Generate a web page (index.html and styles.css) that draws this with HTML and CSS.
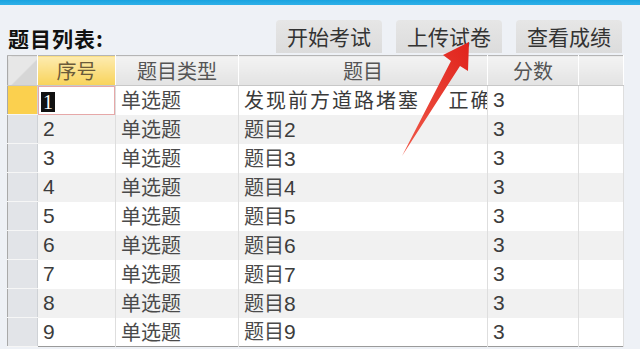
FILE: index.html
```html
<!DOCTYPE html>
<html lang="zh-CN">
<head>
    <meta charset="UTF-8">
    <title>题目列表</title>
    <link rel="stylesheet" href="styles.css">
</head>
<body>
    <div class="topbar"></div>
    <div class="toolbar">
        <h1 class="title">题目列表:</h1>
        <div class="actions">
            <button class="btn">开始考试</button>
            <button class="btn">上传试卷</button>
            <button class="btn">查看成绩</button>
        </div>
    </div>

    <div class="grid-wrap">
        <table class="grid">
            <colgroup>
                <col class="c-sel">
                <col class="c-no">
                <col class="c-type">
                <col class="c-q">
                <col class="c-score">
                <col class="c-rest">
            </colgroup>
            <thead>
                <tr>
                    <th class="corner"></th>
                    <th class="active-col">序号</th>
                    <th>题目类型</th>
                    <th>题目</th>
                    <th>分数</th>
                    <th></th>
                </tr>
            </thead>
            <tbody>
                <tr class="selected">
                    <td class="sel current"></td>
                    <td class="editing"><span class="caret">1</span></td>
                    <td>单选题</td>
                    <td class="clip">发现前方道路堵塞　 正确答案</td>
                    <td class="num">3</td>
                    <td></td>
                </tr>
                <tr><td class="sel"></td><td class="num">2</td><td>单选题</td><td>题目<span class="num">2</span></td><td class="num">3</td><td></td></tr>
                <tr><td class="sel"></td><td class="num">3</td><td>单选题</td><td>题目<span class="num">3</span></td><td class="num">3</td><td></td></tr>
                <tr><td class="sel"></td><td class="num">4</td><td>单选题</td><td>题目<span class="num">4</span></td><td class="num">3</td><td></td></tr>
                <tr><td class="sel"></td><td class="num">5</td><td>单选题</td><td>题目<span class="num">5</span></td><td class="num">3</td><td></td></tr>
                <tr><td class="sel"></td><td class="num">6</td><td>单选题</td><td>题目<span class="num">6</span></td><td class="num">3</td><td></td></tr>
                <tr><td class="sel"></td><td class="num">7</td><td>单选题</td><td>题目<span class="num">7</span></td><td class="num">3</td><td></td></tr>
                <tr><td class="sel"></td><td class="num">8</td><td>单选题</td><td>题目<span class="num">8</span></td><td class="num">3</td><td></td></tr>
                <tr><td class="sel"></td><td class="num">9</td><td>单选题</td><td>题目<span class="num">9</span></td><td class="num">3</td><td></td></tr>
            </tbody>
        </table>
    </div>

    <!-- 指向“上传试卷”的红色箭头 -->
    <svg class="arrow" width="640" height="349" viewBox="0 0 640 349">
        <defs>
            <linearGradient id="arrowFill" x1="0" y1="1" x2="1" y2="0">
                <stop offset="0" stop-color="#f05a4a"/>
                <stop offset="1" stop-color="#e0231c"/>
            </linearGradient>
        </defs>
        <polygon points="469,42 443,55 451,61 402,156 460,66 468,71" fill="url(#arrowFill)"/>
    </svg>
</body>
</html>
```

FILE: styles.css
```css
body {
    margin: 0;
    width: 640px;
    height: 349px;
    overflow: hidden;
    background-color: #eef1f6;
    font-family: "Noto Sans CJK SC", sans-serif;
    position: relative;
}
.topbar {
    height: 5px;
    background: linear-gradient(#1aa3e0, #2fb0e8);
}

/* 标题 + 按钮 */
.toolbar {
    display: flex;
    align-items: flex-end;
    height: 50px;
    padding: 0 18px 0 8px;
}
.title {
    margin: 0 0 3px 0;
    font-size: 21px;
    font-weight: 700;
    color: #111;
    letter-spacing: 1px;
    line-height: 28px;
}
.actions {
    display: flex;
    gap: 14px;
    margin-left: auto;
    padding-bottom: 2px;
}
.btn {
    width: 106px;
    height: 33px;
    padding: 0;
    border: none;
    border-radius: 4px 4px 0 0;
    background: linear-gradient(#e6e6e6, #dcdcdc);
    color: #333;
    font-family: "Noto Sans CJK SC", sans-serif;
    font-size: 21px;
    line-height: 33px;
}

/* 数据表 */
.grid-wrap {
    margin-left: 7px;
    width: 616px;
}
.grid {
    width: 616px;
    border-collapse: collapse;
    table-layout: fixed;
    font-family: "Noto Sans CJK SC", sans-serif;
    font-size: 20px;
    color: #4a4a4a;
    border-left: 1px solid #a9a9a9;
    border-right: 1px solid #9a9a9a;
    border-bottom: 1px solid #9a9a9a;
}
.c-sel { width: 30px; }
.c-no { width: 78px; }
.c-type { width: 123px; }
.c-q { width: 249px; }
.c-score { width: 91px; }
.c-rest { width: 45px; }

.grid thead tr { height: 30px; }
.grid tbody tr { height: 29px; }

.grid th {
    padding: 0;
    font-weight: 400;
    color: #555;
    background: linear-gradient(#f3f3f3, #e3e3e3);
    border-top: 1px solid #b5b5b5;
    border-right: 1px solid #ffffff;
    border-bottom: 1px solid #c8c8c8;
    text-align: center;
    line-height: 20px;
    vertical-align: middle;
}
.grid th.corner {
    background: linear-gradient(135deg, #e7e7e7 55%, #d6d6d6 55%);
}
.grid th.active-col {
    background: linear-gradient(#fdebb0, #f8d35a);
    color: #6a5a3a;
}

.grid td {
    padding: 0 0 0 5px;
    white-space: nowrap;
    overflow: hidden;
    border-right: 1px solid #dedede;
    line-height: 20px;
    vertical-align: middle;
}
.grid tbody tr:nth-child(even) td { background-color: #f1f1f1; }
.grid tbody tr:nth-child(odd) td { background-color: #ffffff; }

.grid td.sel {
    padding: 0;
    background-color: #e2e4e8 !important;
    border-right: 1px solid #cfd2d6;
    border-bottom: 1px solid #f6f6f6;
}
.grid td.sel.current { background-color: #fbd04e !important; }

.grid tr.selected td { background-color: #a9cdf0; }
.grid tr.selected td.editing {
    background-color: #fff;
    box-shadow: inset 0 0 0 1px #e6a8a8;
    padding-left: 3px;
}
.caret {
    display: inline-block;
    background: #111;
    color: #fff;
    font-family: "Liberation Serif", serif;
    font-size: 20px;
    line-height: 20px;
    padding: 0 2px;
    vertical-align: middle;
}
.num {
    font-family: "Liberation Sans", sans-serif;
    font-size: 21px;
    line-height: 20px;
    color: #3c3c3c;
}
.clip {
    text-overflow: clip;
    color: #3a3a3a;
    letter-spacing: 2px;
    padding-left: 4px;
}

.arrow {
    position: absolute;
    left: 0;
    top: 0;
    pointer-events: none;
}
```
